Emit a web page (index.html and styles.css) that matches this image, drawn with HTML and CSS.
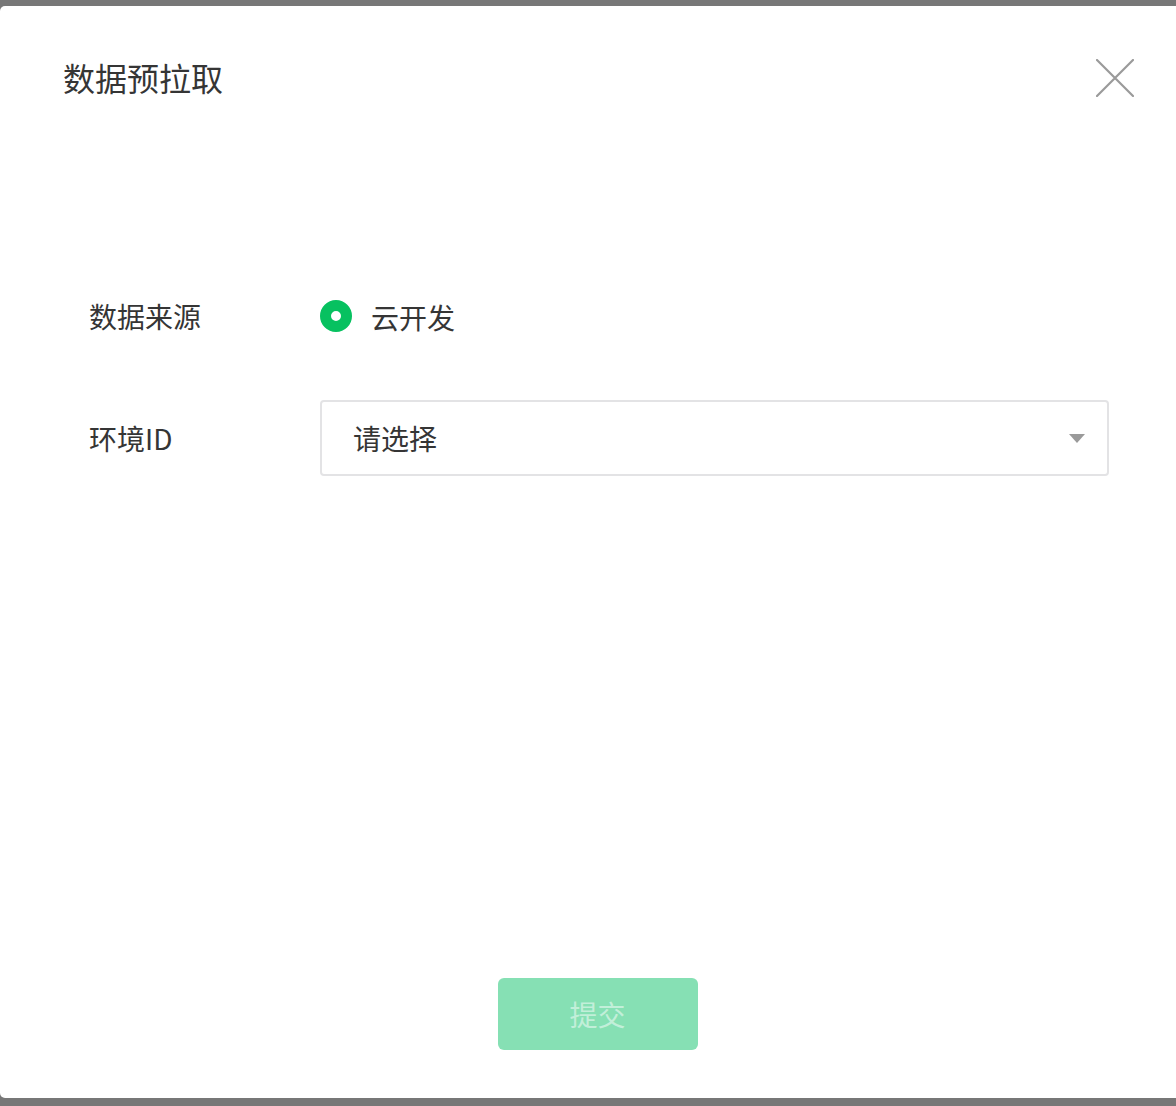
FILE: index.html
```html
<!DOCTYPE html>
<html lang="zh-CN">
<head>
<meta charset="utf-8">
<title>数据预拉取</title>
<link rel="stylesheet" href="styles.css">
</head>
<body>
<div class="dialog">
  <div class="dialog-header">
    <h2 class="dialog-title">数据预拉取</h2>
    <button class="dialog-close" aria-label="关闭">
      <svg width="38" height="38" viewBox="0 0 38 38"><path d="M1 1L37 37M37 1L1 37" stroke="#9a9a9a" stroke-width="2.2" stroke-linecap="round" fill="none"/></svg>
    </button>
  </div>
  <div class="dialog-body">
    <div class="form-row">
      <div class="form-label">数据来源</div>
      <div class="form-control">
        <label class="radio">
          <span class="radio-dot"></span>
          <span class="radio-text">云开发</span>
        </label>
      </div>
    </div>
    <div class="form-row">
      <div class="form-label">环境ID</div>
      <div class="form-control">
        <div class="select">
          <span class="select-placeholder">请选择</span>
          <span class="select-arrow"></span>
        </div>
      </div>
    </div>
  </div>
  <div class="dialog-footer">
    <button class="btn-primary" disabled>提交</button>
  </div>
</div>
</body>
</html>
```

FILE: styles.css
```css
html, body {
  margin: 0;
  padding: 0;
  height: 100%;
}
body {
  background: #777777;
  overflow: hidden;
  font-family: "Noto Sans CJK SC", "Noto Sans", sans-serif;
  color: #353535;
}
.dialog {
  box-sizing: border-box;
  width: 1196px;
  height: 1092px;
  margin-top: 6px;
  background: #ffffff;
  border-radius: 5px;
  padding: 0 62px 48px 63px;
  display: flex;
  flex-direction: column;
}
.dialog-header {
  display: flex;
  align-items: center;
  justify-content: space-between;
  padding-top: 49px;
}
.dialog-title {
  margin: 0;
  font-size: 32px;
  font-weight: 400;
  line-height: 46px;
  color: #353535;
  position: relative;
  top: -1px;
}
.dialog-close {
  width: 38px;
  height: 38px;
  padding: 0;
  border: 0;
  background: none;
  display: flex;
}
.dialog-body {
  padding: 0 25px 0 26px;
  margin-top: 195px;
  display: flex;
  flex-direction: column;
  gap: 64px;
}
.form-row {
  display: flex;
  align-items: center;
}
.form-label {
  width: 231px;
  flex: none;
  font-size: 28px;
  line-height: 40px;
  color: #353535;
}
.form-control {
  flex: 1;
}
.radio {
  display: flex;
  align-items: center;
  height: 40px;
}
.radio-dot {
  box-sizing: border-box;
  width: 32px;
  height: 32px;
  border-radius: 50%;
  border: 11px solid #07c160;
  background: #ffffff;
  margin-right: 19px;
}
.radio-text {
  font-size: 28px;
  line-height: 40px;
  position: relative;
  top: 1px;
}
.select {
  box-sizing: border-box;
  height: 76px;
  border: 2px solid #e3e3e5;
  border-radius: 4px;
  display: flex;
  align-items: center;
  justify-content: space-between;
  padding: 0 22px 0 31px;
}
.select-placeholder {
  font-size: 28px;
  line-height: 40px;
  color: #353535;
}
.select-arrow {
  width: 0;
  height: 0;
  border-left: 8px solid transparent;
  border-right: 8px solid transparent;
  border-top: 9px solid #9a9a9a;
}
.dialog-footer {
  margin-top: auto;
  display: flex;
  justify-content: center;
  padding-right: 2px;
}
.btn-primary {
  width: 200px;
  height: 72px;
  border: 0;
  border-radius: 6px;
  background: #86e0b4;
  color: rgba(255, 255, 255, 0.5);
  font-family: "Noto Sans CJK SC", "Noto Sans", sans-serif;
  font-size: 28px;
  line-height: 40px;
  padding: 0;
}
```
